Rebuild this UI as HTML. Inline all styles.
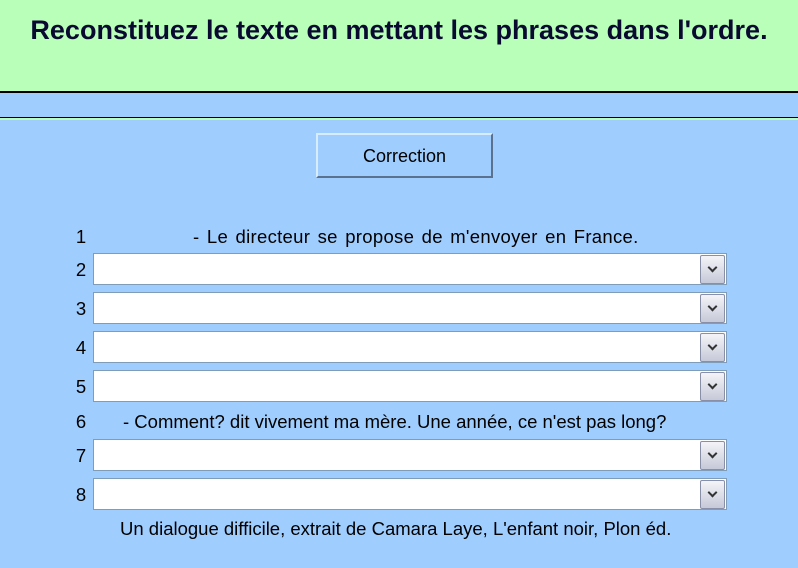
<!DOCTYPE html>
<html><head><style>
body{margin:0;width:798px;height:568px;background:#9fcdfe;font-family:"Liberation Sans",sans-serif;position:relative;overflow:hidden}
.hd{position:absolute;left:0;top:0;width:798px;height:91px;background:#b9feb9;border-bottom:2px solid #000}
.hd h1{margin:0;position:absolute;top:15px;left:0;width:798px;text-align:center;font-size:27px;font-weight:bold;color:#0a0a30;white-space:nowrap}
.l1{position:absolute;left:0;top:117px;width:798px;height:1px;background:#000}
.l2{position:absolute;left:0;top:118px;width:798px;height:2px;background:#b9feb9}
.btn{position:absolute;left:316px;top:133px;width:173px;height:41px;background:#9fcdfe;border:2px solid;border-color:#d6ecff #5a7290 #5a7290 #d6ecff;font-size:18px;text-align:center;line-height:43px}
.n{position:absolute;left:74px;font-size:18.5px;width:14px;text-align:center}
.t{position:absolute;font-size:18.5px;white-space:nowrap}
.s{position:absolute;left:93px;width:632px;height:30px;background:#fff;border:1px solid #7f9db9}
.s i{position:absolute;right:1px;top:1px;width:23px;height:27px;border:1px solid #8a8fa8;border-radius:2px;background:linear-gradient(#f4f4f8,#c6c9d8)}
.s i:after{content:"";position:absolute;left:8px;top:8px;width:5px;height:5px;border-right:2px solid #333;border-bottom:2px solid #333;transform:rotate(45deg)}
</style></head><body>
<div class="hd"><h1>Reconstituez le texte en mettant les phrases dans l'ordre.</h1></div>
<div class="l1"></div><div class="l2"></div>
<div class="btn">Correction</div>
<div class="n" style="top:226px">1</div><div class="t" style="left:193px;top:226px;word-spacing:2px;letter-spacing:0.3px">- Le directeur se propose de m'envoyer en France.</div>
<div class="n" style="top:259px">2</div><div class="s" style="top:253px"><i></i></div>
<div class="n" style="top:298px">3</div><div class="s" style="top:292px"><i></i></div>
<div class="n" style="top:337px">4</div><div class="s" style="top:331px"><i></i></div>
<div class="n" style="top:376px">5</div><div class="s" style="top:370px"><i></i></div>
<div class="n" style="top:411px">6</div><div class="t" style="left:123px;top:411px">- Comment? dit vivement ma mère. Une année, ce n'est pas long?</div>
<div class="n" style="top:445px">7</div><div class="s" style="top:439px"><i></i></div>
<div class="n" style="top:484px">8</div><div class="s" style="top:478px"><i></i></div>
<div class="t" style="left:120px;top:518px">Un dialogue difficile, extrait de Camara Laye, L'enfant noir, Plon éd.</div>
</body></html>
